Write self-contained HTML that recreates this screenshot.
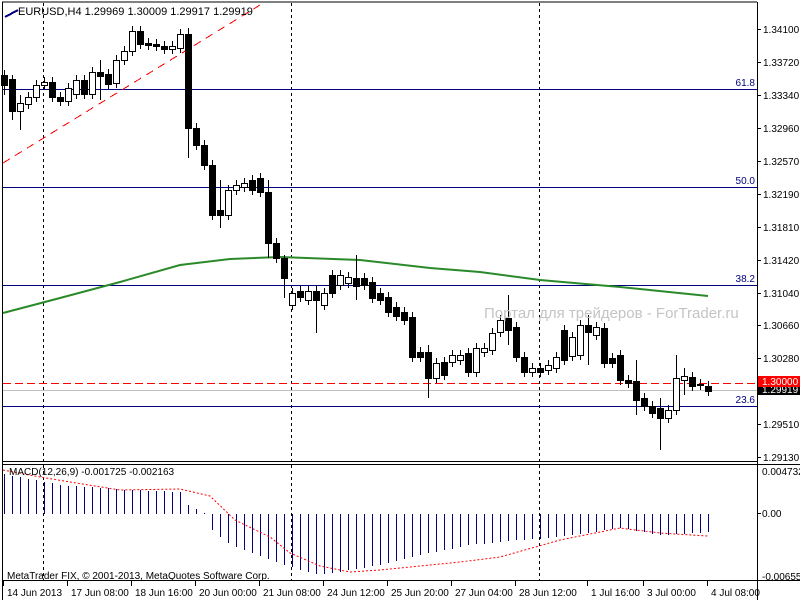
<!DOCTYPE html>
<html><head><meta charset="utf-8"><style>
html,body{margin:0;padding:0;background:#fff;width:800px;height:600px;overflow:hidden}
svg{display:block}
text{font-family:"Liberation Sans",sans-serif;font-size:10px;fill:#000}
</style></head><body>
<svg id="s" width="800" height="600" xmlns="http://www.w3.org/2000/svg">
<rect x="0" y="0" width="800" height="600" fill="#fff"/>
<g id="g"></g>
<text x="484" y="318" style="font-size:15px;fill:#c4c4c4">Портал для трейдеров - ForTrader.ru</text>
<text x="18" y="15" style="font-size:11px">EURUSD,H4  1.29969 1.30009 1.29917 1.29919</text>
<text x="9" y="475" style="font-size:10px">MACD(12,26,9) -0.001725 -0.002163</text>
<text x="7" y="579" style="font-size:10px">MetaTrader FIX, © 2001-2013, MetaQuotes Software Corp.</text>
</svg>
<script>
var g=document.getElementById('g'),h='';
function L(x1,y1,x2,y2,c,w,d){h+='<line x1="'+x1+'" y1="'+y1+'" x2="'+x2+'" y2="'+y2+'" stroke="'+c+'" stroke-width="'+(w||1)+'"'+(d?' stroke-dasharray="'+d+'"':'')+' shape-rendering="crispEdges"/>';}
function T(x,y,t,c,a){h+='<text x="'+x+'" y="'+y+'"'+(c?' style="fill:'+c+'"':'')+(a?' text-anchor="'+a+'"':'')+'>'+t+'</text>';}
L(2,2,757,2,'#000');L(2.5,2,2.5,600,'#000');L(757.5,2,757.5,600,'#000');
L(2,461.5,757,461.5,'#000');L(2,464.5,800,464.5,'#000');L(2,580.5,800,580.5,'#000');
[43,291,539].forEach(function(x){L(x+.5,3,x+.5,580,'#000',1,'3,3');});
[[89,'61.8'],[187,'50.0'],[285,'38.2'],[406,'23.6']].forEach(function(l){L(3,l[0]+.5,757,l[0]+.5,'#000080');T(755,l[0]-3,l[1],'#000080','end');});
L(3,390.5,757,390.5,'#c0c0c0');
L(3,383.5,757,383.5,'#ff0000',1,'8,4');
L(3,163,260,5,'#ff0000',1,'8,6');
L(5,17,18,10,'#000080',2);
h+='<polyline fill="none" stroke="#2a8a2a" stroke-width="2" points="3,313 60,298 120,282 180,265 230,259 280,257 360,260 430,268 480,272 540,280 620,287 708,296"/>';
var c=[[75,85,0],[79,111,0],[103,111,1],[97,104,1],[85,97,1],[82,85,1],[82,97,0],[97,101,0],[88,101,1],[80,94,1],[80,94,0],[72,94,1],[72,76,0],[74,84,0],[60,83,1],[51,60,1],[31,51,1],[31,44,0],[43,45,0],[44,46,0],[46,49,0],[46,49,1],[34,48,1],[34,128,0],[128,145,0],[145,165,0],[165,215,0],[210,215,0],[190,215,1],[185,190,1],[183,187,1],[180,190,0],[178,192,0],[192,243,0],[243,258,0],[258,278,0],[293,305,1],[291,297,0],[291,300,1],[291,300,0],[293,305,1],[275,293,0],[275,285,1],[277,283,1],[278,286,0],[278,285,0],[282,298,0],[293,300,0],[297,312,0],[307,316,0],[312,320,0],[317,357,0],[352,357,0],[352,378,0],[363,378,1],[362,375,0],[355,362,1],[355,360,1],[353,372,0],[348,372,1],[348,352,1],[333,350,1],[320,332,1],[318,330,0],[327,357,0],[357,372,0],[368,372,1],[368,372,0],[365,370,1],[357,368,1],[330,360,0],[337,356,1],[325,355,1],[325,332,0],[327,335,1],[328,363,0],[358,363,0],[355,380,0],[380,383,0],[381,400,0],[398,406,0],[406,413,0],[408,418,0],[410,418,1],[378,410,1],[376,380,1],[377,386,0],[384,385,0],[386,391,0]];
var wk={0:[70,95],1:[75,120],2:[95,130],12:[60,100],23:[28,158],27:[180,228],33:[180,258],35:[255,298],39:[285,333],44:[255,300],53:[345,398],63:[295,345],73:[315,365],79:[360,415],82:[398,450],84:[355,415],85:[368,395]};
c.forEach(function(k,i){var x=4+8*i;var w=wk[i]||[k[0]-5,k[1]+5];
L(x+.5,w[0],x+.5,w[1],'#000');
var hh=Math.max(k[1]-k[0],1);
if(k[2])h+='<rect x="'+(x-2.5)+'" y="'+(k[0]+.5)+'" width="6" height="'+hh+'" fill="#fff" stroke="#000"/>';
else h+='<rect x="'+(x-3)+'" y="'+k[0]+'" width="7" height="'+(hh+1)+'" fill="#000"/>';});
var mp=[[4,474],[60,485],[130,490],[180,492],[188,505],[204,513],[212,530],[230,545],[270,560],[300,570],[320,575],[350,570],[380,565],[420,555],[470,545],[520,540],[560,537],[620,528],[660,535],[708,532]];
function itp(x){for(var j=0;j<mp.length-1;j++)if(x<=mp[j+1][0]){var a=mp[j],b=mp[j+1];return a[1]+(b[1]-a[1])*(x-a[0])/(b[0]-a[0]);}return mp[mp.length-1][1];}
for(var i=0;i<89;i++){var x=4+8*i,y=Math.round(itp(x));L(x+.5,514,x+.5,y===514?515:y,'#000080');}
h+='<polyline fill="none" stroke="#ff0000" stroke-dasharray="2,2" points="3,470 40,477 70,482 120,490 180,489 210,496 235,520 270,537 290,553 320,566 350,572 380,570 420,566 460,562 500,557 560,540 620,528 660,533 708,536"/>';
[[29,'1.34100'],[62,'1.33720'],[95,'1.33340'],[128,'1.32960'],[161,'1.32570'],[194,'1.32190'],[227,'1.31810'],[260,'1.31420'],[293,'1.31040'],[325,'1.30660'],[358,'1.30280'],[424,'1.29510'],[457,'1.29130']].forEach(function(p){L(757,p[0]+.5,761,p[0]+.5,'#000');T(763,p[0]+4,p[1]);});
h+='<rect x="758" y="384" width="42" height="11" fill="#000"/><text x="762" y="393" style="fill:#fff">1.29919</text>';
h+='<rect x="758" y="376" width="42" height="11" fill="#ff0000"/><text x="762" y="385" style="fill:#fff">1.30000</text>';
T(762,475,'0.004732');T(762,517,'0.00');T(762,580,'-0.006554');
L(757,513.5,761,513.5,'#000');
[[3,'14 Jun 2013'],[67,'17 Jun 08:00'],[131,'18 Jun 16:00'],[195,'20 Jun 00:00'],[259,'21 Jun 08:00'],[323,'24 Jun 12:00'],[387,'25 Jun 20:00'],[451,'27 Jun 04:00'],[515,'28 Jun 12:00'],[587,'1 Jul 16:00'],[643,'3 Jul 00:00'],[707,'4 Jul 08:00']].forEach(function(t){L(t[0]+.5,581,t[0]+.5,586,'#000');T(t[0]+4,596,t[1]);});
g.innerHTML=h;
</script>
</body></html>
